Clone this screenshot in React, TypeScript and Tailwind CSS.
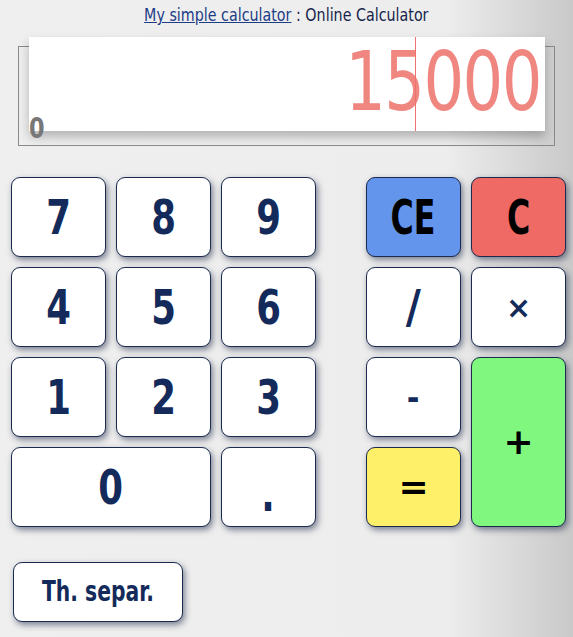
import React from 'react';

const font = { fontFamily: '"DejaVu Sans", sans-serif' };

const keyBase =
  'flex items-center justify-center rounded-[9px] border border-[#1b2a4e] shadow-[2px_3px_6px_rgba(30,40,70,0.55)]';

function Key({ label, className = '', narrow = 'scale-x-[0.74]' }: { label: string; className?: string; narrow?: string }) {
  return (
    <button className={`${keyBase} ${className}`}>
      <span className={`inline-block ${narrow}`}>{label}</span>
    </button>
  );
}

export default function App() {
  return (
    <div
      className="w-full min-h-[637px] bg-[linear-gradient(to_right,#efefef_0%,#ededed_78%,#c9c9c9_100%)]"
      style={font}
    >
      <div className="pt-[5px] text-center text-[17px] leading-[20px] text-[#16244a]">
        <span className="inline-block scale-x-[0.84]">
          <a href="#" className="text-[#1d3c86] underline">My simple calculator</a> : Online Calculator
        </span>
      </div>

      <div className="relative mx-[18px] mt-[21px] h-[100px] border border-[#8a8a8a]">
        <div className="absolute left-[10px] right-[9px] top-[-10px] h-[94px] bg-white shadow-[0_6px_10px_rgba(0,0,0,0.25)]">
          <div className="absolute right-[4px] top-[2px] origin-right scale-x-[0.78] text-[82px] leading-[86px] text-[#f08680] tracking-[-2px]">
            15000
          </div>
          <div className="absolute left-[386px] top-0 h-full w-px bg-[#f07070]" />
        </div>
        <div className="absolute left-[10px] top-[68px] origin-left scale-x-[0.8] text-[28px] leading-[28px] font-bold text-[#777]">0</div>
      </div>

      <div className="mt-[31px] flex pl-[11px]">
        <div className="grid grid-cols-[95px_95px_95px] grid-rows-[80px_80px_80px_80px] gap-[10px] text-[48px] font-bold text-[#142a5a]">
          <Key label="7" className="bg-white" />
          <Key label="8" className="bg-white" />
          <Key label="9" className="bg-white" />
          <Key label="4" className="bg-white" />
          <Key label="5" className="bg-white" />
          <Key label="6" className="bg-white" />
          <Key label="1" className="bg-white" />
          <Key label="2" className="bg-white" />
          <Key label="3" className="bg-white" />
          <Key label="0" className="col-span-2 bg-white" />
          <Key label="." className="bg-white pt-[14px]" />
        </div>
        <div className="ml-[50px] grid grid-cols-[95px_95px] grid-rows-[80px_80px_80px_80px] gap-[10px] font-bold">
          <Key label="CE" className="bg-[#6495ed] text-[48px] text-black" narrow="scale-x-[0.66]" />
          <Key label="C" className="bg-[#ef6a64] text-[48px] text-black" narrow="scale-x-[0.66]" />
          <Key label="/" className="bg-white text-[46px] text-[#142a5a]" narrow="scale-x-[0.9]" />
          <Key label="×" className="bg-white text-[30px] text-[#142a5a]" narrow="scale-x-100" />
          <Key label="-" className="bg-white text-[34px] text-[#142a5a]" narrow="scale-x-[0.9]" />
          <Key label="+" className="row-span-2 bg-[#80f880] text-[36px] text-black" narrow="scale-x-100" />
          <Key label="=" className="bg-[#fff06a] text-[36px] text-black" narrow="scale-x-100" />
        </div>
      </div>

      <div className="mt-[35px] pl-[13px]">
        <button className={`${keyBase} h-[60px] w-[170px] bg-white text-[29px] font-bold text-[#142a5a]`}>
          <span className="inline-block scale-x-[0.7]">Th. separ.</span>
        </button>
      </div>
    </div>
  );
}
